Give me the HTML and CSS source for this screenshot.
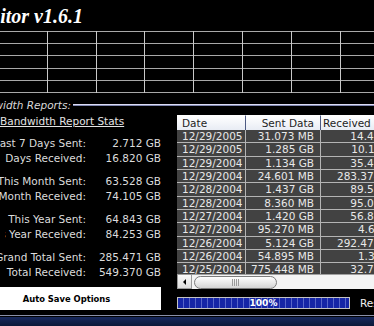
FILE: index.html
```html
<!DOCTYPE html>
<html lang="en">

<head>
    <meta charset="UTF-8">
    <meta name="viewport" content="width=device-width, initial-scale=1.0">
    <title>Bandwidth Monitor v1.6.1</title>
    <link rel="stylesheet" href="styles.css">
</head>

<body>
    <div class="titlebar">
        <h1 class="title">Bandwidth Monitor v1.6.1</h1>
    </div>

    <svg class="graph" width="374" height="64" viewBox="0 0 374 64" shape-rendering="crispEdges">
        <g stroke="#a8a8a8" stroke-width="1">
            <line x1="0" y1="1.5" x2="374" y2="1.5" />
            <line x1="0" y1="13.5" x2="374" y2="13.5" />
            <line x1="0" y1="25.5" x2="374" y2="25.5" />
            <line x1="0" y1="38.5" x2="374" y2="38.5" />
            <line x1="0" y1="50.5" x2="374" y2="50.5" />
            <line x1="0" y1="62.5" x2="374" y2="62.5" />
        </g>
        <g stroke="#c8c8c8" stroke-width="1">
            <line x1="47.5" y1="1" x2="47.5" y2="63" />
            <line x1="96.5" y1="1" x2="96.5" y2="63" />
            <line x1="144.5" y1="1" x2="144.5" y2="63" />
            <line x1="193.5" y1="1" x2="193.5" y2="63" />
            <line x1="242.5" y1="1" x2="242.5" y2="63" />
            <line x1="291.5" y1="1" x2="291.5" y2="63" />
            <line x1="340.5" y1="1" x2="340.5" y2="63" />
        </g>
    </svg>

    <div class="section-head">
        <span class="section-label">Bandwidth Reports:</span>
        <div class="section-rule"></div>
    </div>

    <div class="main">
        <div class="stats">
            <div class="stats-title">Bandwidth Report Stats</div>

            <div class="stat-group">
                <div class="stat"><span class="stat-label">Last 7 Days Sent:</span><span class="stat-value">2.712 GB</span></div>
                <div class="stat"><span class="stat-label short">Last 7 Days Received:</span><span class="stat-value">16.820 GB</span></div>
            </div>
            <div class="stat-group">
                <div class="stat"><span class="stat-label">This Month Sent:</span><span class="stat-value">63.528 GB</span></div>
                <div class="stat"><span class="stat-label">This Month Received:</span><span class="stat-value">74.105 GB</span></div>
            </div>
            <div class="stat-group">
                <div class="stat"><span class="stat-label">This Year Sent:</span><span class="stat-value">64.843 GB</span></div>
                <div class="stat"><span class="stat-label short">This Year Received:</span><span class="stat-value">84.253 GB</span></div>
            </div>
            <div class="stat-group">
                <div class="stat"><span class="stat-label">Grand Total Sent:</span><span class="stat-value">285.471 GB</span></div>
                <div class="stat"><span class="stat-label short">Grand Total Received:</span><span class="stat-value">549.370 GB</span></div>
            </div>

            <button class="autosave">Auto Save Options</button>
        </div>

        <div class="report">
            <div class="table-wrap">
                <div class="row head">
                    <div class="cell date">Date</div>
                    <div class="cell num">Sent Data</div>
                    <div class="cell recv">Received Data</div>
                </div>
                <div class="row"><div class="cell date">12/29/2005</div><div class="cell num">31.073 MB</div><div class="cell recv">14.49 MB</div></div>
                <div class="row"><div class="cell date">12/29/2005</div><div class="cell num">1.285 GB</div><div class="cell recv">10.13 GB</div></div>
                <div class="row"><div class="cell date">12/29/2004</div><div class="cell num">1.134 GB</div><div class="cell recv">35.45 MB</div></div>
                <div class="row"><div class="cell date">12/29/2004</div><div class="cell num">24.601 MB</div><div class="cell recv">283.374 MB</div></div>
                <div class="row"><div class="cell date">12/28/2004</div><div class="cell num">1.437 GB</div><div class="cell recv">89.59 MB</div></div>
                <div class="row"><div class="cell date">12/28/2004</div><div class="cell num">8.360 MB</div><div class="cell recv">95.02 MB</div></div>
                <div class="row"><div class="cell date">12/27/2004</div><div class="cell num">1.420 GB</div><div class="cell recv">56.88 MB</div></div>
                <div class="row"><div class="cell date">12/27/2004</div><div class="cell num">95.270 MB</div><div class="cell recv">4.62 GB</div></div>
                <div class="row"><div class="cell date">12/26/2004</div><div class="cell num">5.124 GB</div><div class="cell recv">292.471 MB</div></div>
                <div class="row"><div class="cell date">12/26/2004</div><div class="cell num">54.895 MB</div><div class="cell recv">1.33 GB</div></div>
                <div class="row"><div class="cell date">12/25/2004</div><div class="cell num">775.448 MB</div><div class="cell recv">32.79 MB</div></div>
            </div>

            <div class="hscroll">
                <div class="scroll-btn"><span class="arrow-left"></span></div>
                <div class="scroll-track">
                    <div class="scroll-thumb"><span class="grip"></span></div>
                </div>
            </div>

            <div class="progress-row">
                <div class="progress"><span>100%</span></div>
                <span class="reset">Reset</span>
            </div>
        </div>
    </div>

    <div class="footer"></div>
</body>

</html>
```

FILE: styles.css
```css
body {
    margin: 0;
    width: 374px;
    height: 326px;
    overflow: hidden;
    background-color: #000;
    color: #dcdcdc;
    font-family: "DejaVu Sans", Verdana, sans-serif;
    font-size: 10.5px;
}

.titlebar {
    height: 30px;
}

/* the window is cropped on the left, so the title hangs off the start */
.title {
    display: flex;
    justify-content: flex-end;
    width: 83px;
    margin: 0;
    padding-top: 3px;
    white-space: nowrap;
    font-family: "Liberation Serif", serif;
    font-style: italic;
    font-weight: bold;
    font-size: 20px;
    line-height: 26px;
    color: #fff;
}

.graph {
    display: block;
}

.section-head {
    display: flex;
    align-items: center;
    height: 12px;
    margin-top: 5px;
}

.section-label {
    display: flex;
    justify-content: flex-end;
    width: 71px;
    flex-shrink: 0;
    white-space: nowrap;
    font-style: italic;
    color: #d8d8d8;
}

.section-rule {
    flex: 1;
    margin-left: 2px;
    border-top: 1px solid #dcdcf4;
    border-bottom: 1px solid #7f86b0;
}

.main {
    display: flex;
}

.stats {
    width: 161px;
    flex-shrink: 0;
}

.stats-title {
    margin-top: 3px;
    line-height: 14px;
    text-decoration: underline;
    color: #e4e4e4;
}

.stat-group {
    margin-top: 8px;
}

.stat {
    display: flex;
    line-height: 15px;
    white-space: nowrap;
}

.stat-label {
    display: flex;
    justify-content: flex-end;
    width: 86px;
    flex-shrink: 0;
}

/* these label boxes are narrower, the start of the text is clipped */
.stat-label.short {
    width: 81px;
    margin-left: 5px;
    overflow: hidden;
}

.stat-value {
    width: 75px;
    text-align: right;
}

.autosave {
    display: block;
    width: 189px;
    height: 23px;
    margin: 7px 0 0 -28px;
    padding: 0;
    border: none;
    background-color: #fff;
    color: #000;
    font-family: "DejaVu Sans", Verdana, sans-serif;
    font-weight: bold;
    font-size: 8.4px;
}

.report {
    flex: 1;
    min-width: 0;
    margin-left: 16px;
    padding-top: 4px;
}

.table-wrap {
    height: 159px;
    overflow: hidden;
}

.row {
    display: grid;
    grid-template-columns: 69px 75px 85px;
    height: 13.33px;
}

.cell {
    box-sizing: border-box;
    padding: 0 5px;
    border-right: 1px solid #b4b4b4;
    border-bottom: 1px solid #b4b4b4;
    background-color: #424242;
    color: #e8e8e8;
    line-height: 12.33px;
    white-space: nowrap;
    overflow: hidden;
}

.num,
.recv {
    text-align: right;
}

.num {
    padding-right: 6px;
}

.row.head {
    height: 15px;
}

.head .cell {
    line-height: 14px;
    background: linear-gradient(#ffffff, #e8ecf4);
    color: #1e1e1e;
    border-top: 1px solid #fff;
    border-right: 1px solid #4d5a82;
    border-bottom: none;
}

.head .recv {
    text-align: left;
    padding-left: 2px;
}

.hscroll {
    display: flex;
    height: 15px;
}

.scroll-btn {
    display: flex;
    align-items: center;
    justify-content: center;
    box-sizing: border-box;
    width: 15px;
    border: 1px solid #9a9a9a;
    background: linear-gradient(#fafafa, #dcdcdc);
}

.arrow-left {
    width: 0;
    height: 0;
    border-top: 3px solid transparent;
    border-bottom: 3px solid transparent;
    border-right: 3px solid #000;
}

.scroll-track {
    flex: 1;
    box-sizing: border-box;
    padding: 1px 0 0 2px;
    border-top: 1px solid #a0a0a0;
    background-color: #f4f4f4;
}

.scroll-thumb {
    display: flex;
    align-items: center;
    justify-content: center;
    box-sizing: border-box;
    width: 83px;
    height: 13px;
    border: 1px solid #7c7c7c;
    border-radius: 7px;
    background: linear-gradient(#ffffff, #e6e6e6 60%, #d4d4d4);
}

.grip {
    width: 7px;
    height: 7px;
    background: repeating-linear-gradient(90deg, #9a9a9a 0 1px, transparent 1px 2px);
}

.progress-row {
    display: flex;
    align-items: center;
    margin-top: 8px;
}

.progress {
    display: flex;
    align-items: center;
    justify-content: center;
    flex-shrink: 0;
    box-sizing: border-box;
    width: 173px;
    height: 12px;
    border: 1px solid #c4c4c4;
    background: repeating-linear-gradient(90deg, #1626a6 0 5px, #5866c8 5px 6px);
}

.progress span {
    color: #fff;
    font-weight: bold;
    font-size: 9px;
    line-height: 10px;
}

.reset {
    margin-left: 10px;
    color: #f0f0f0;
    white-space: nowrap;
}

.footer {
    height: 10px;
    margin-top: 5px;
    border-top: 1px solid #8a90a8;
    background: linear-gradient(#000 0 1px, #17285c 1px, #0b1838);
}
```
